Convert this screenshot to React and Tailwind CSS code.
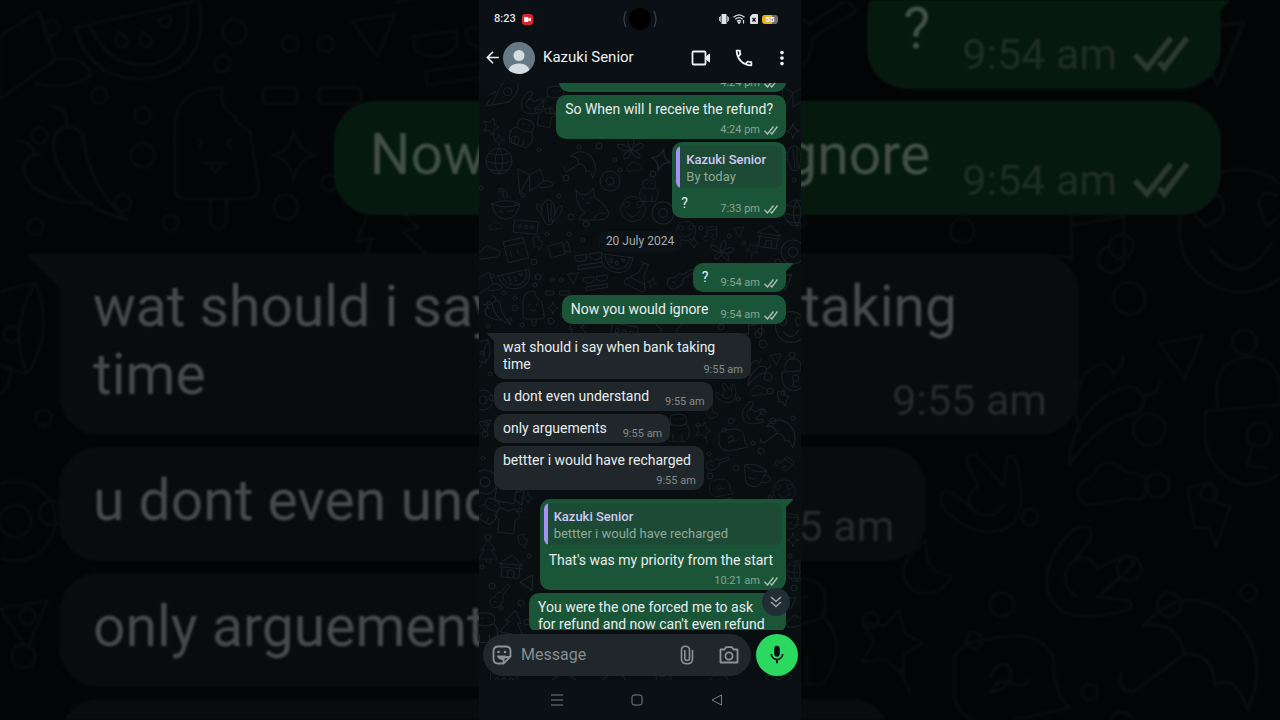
import { useState } from "react";
import clsx from "clsx";
import { MdArrowBack, MdMoreVert, MdMic, MdOutlineCall } from "react-icons/md";

const messages = [
  { id: 1, time: "4:24 pm", mine: true, layout: "stack" },
  { id: 2, text: "So When will I receive the refund?", time: "4:24 pm", mine: true, layout: "stack" },
  { id: 3, text: "?", time: "7:33 pm", mine: true, layout: "inline", quote: "By today" },
  { id: 4, date: "20 July 2024" },
  { id: 5, text: "?", time: "9:54 am", mine: true, layout: "inline", tail: true },
  { id: 6, text: "Now you would ignore", time: "9:54 am", mine: true, layout: "inline" },
  { id: 7, text: "wat should i say when bank taking time", time: "9:55 am", layout: "overlap", tail: true, space: true },
  { id: 8, text: "u dont even understand", time: "9:55 am", layout: "inline" },
  { id: 9, text: "only arguements", time: "9:55 am", layout: "inline" },
  { id: 10, text: "bettter i would have recharged", time: "9:55 am", layout: "stack" },
  {
    id: 11,
    text: "That's was my priority from the start",
    time: "10:21 am",
    mine: true,
    layout: "stack",
    tail: true,
    space: true,
    quote: "bettter i would have recharged",
  },
  { id: 12, text: "You were the one forced me to ask for refund and now can't even refund", mine: true, layout: "stack" },
];

const shapes = {
  lolly: "M-11-9Q-10-18 1-18Q0-13 4-11Q5-8 8-7L10 6Q11 10 6 10H-8Q-11 10-11 7ZM-2 10V16Q0 19 2 16V10M-5-5l1 1-1 1M3-5l-1 1 1 1M-4 1h6M-2 1q1 4 3 0",
  melon: "M-16-4L15-11Q18 4 6 8Q-11 12-16-4ZM-12-4Q-7 7 4 5Q14 2 12-10M-5-3q-2 3 1 4q3-1-1-4M1-3q-2 3 1 4q3-1-1-4M5-6q1 3 3 1q1-3-3-1",
  chili: "M-6-8q4-3 6 1Q1 4 10 12Q0 10-5 1Q-8-5-6-8ZM-10-3Q-16-2-12 4Q-6 9 2 8M-4-9q1-4-3-5M-11-3q-1-3-4-3",
  smiley: "M-14 0A14 14 0 1 0 14 0A14 14 0 1 0-14 0M-10-3q-2-4 2-4q3-3 4 1q1 3-4 5ZM4-6q1-4 4-2q4-1 3 3l-5 4ZM-7 4Q0 14 7 3",
  cloud: "M-8 6Q-13 4-10-1Q-6-2-6-4Q-2-10 4-4Q11-4 11 1Q9 6 4 4Q-2 6-8 6Z",
  bolt: "M-6-8L1-10L2-4L6-3L2 8L0 3L-4 3Z",
  hand: "M-3-11Q3-13 1-8L-3-3M-3-11Q-12-2-9 6Q-6 13 8 10Q13 9 11 7L3 6Q9 1 12-2Q12-6 7-3L3-1Q0-6-4-2Q-7 3-2 6",
  chat: "M-13-6Q-11-10 0-11Q11-12 12-4Q12 3 16 7L2 10Q-11 13-13 4ZM-4-1q3-5 5-2q1 5-5 6q2-4 6-2q2 1 4-1",
  globe: "M-13 0A13 13 0 1 0 13 0A13 13 0 1 0-13 0M-13 0Q0 5 13 0M-10-8Q0-4 10-8M-10 8Q0 12 10 8M0-13Q-8 0 0 13M0-13Q8 0 0 13",
  book: "M-16-12L-4-6L-14 12ZM-4-6L6-12L10 0L-4 10ZM10 0q8-1 9 4q-6 4-14 2",
  bowl: "M-14-2Q0 4 14-2Q10 14-1 13Q-12 12-14-2ZM-14-2Q0-9 14-2M-2-8q-3-4 1-8q5 5 1 8M-7 5l4 2M2 6l5-2",
  cactus: "M-4 12Q-13-2-5-11Q4-16 5 0L2 12ZM-9 2Q-16-5-13-8Q-9-8-8-2M5 2Q8-8 12-6Q14 0 3 10M-3-9L-1 10M1-9V9",
  cat: "M-14-14l5 5l7-1l5-6l2 10Q12-3 18 6Q21 16 8 16H-11Q-9 10-4 9Q-14 4-14-14ZM-8-5h2M0-6h2M-4-1h3M4 14q5-8 12-4",
  donut: "M-10 0A10 10 0 1 0 10 0A10 10 0 1 0-10 0M-4 0A4 4 0 1 0 4 0A4 4 0 1 0-4 0",
  leaf: "M0 0Q-6-8 0-14Q6-8 0 0Q8-10 13-5Q10 2 0 0Q10 2 9 8Q2 8 0 0Q0 9-7 9Q-9 3 0 0Q-12 2-14-5Q-8-8 0 0",
  star: "M0-7Q1-1 6 0Q1 1 0 7Q-1 1-6 0Q-1-1 0-7Z",
  rocket: "M-10 12L-5-8Q0-18 12-14Q14 0 4 7ZM-1-4A4 4 0 1 0 7-4A4 4 0 1 0-1-4M-10 12l-6 2l3-8M-9-2l-6 5",
  flask: "M-3-14h8M-1-14L-2-3L-11 9Q-12 13-8 13H9Q13 12 10 8L4-3V-14M-8 5H8",
  house: "M-13-2L0-12L13-2ZM-10-2V13H10V-2M-3 13V5H4V13M-13 2h26",
  note: "M-5 8A3 3 0 1 1-5 4V-8L7-10V4A3 3 0 1 1 3 1M-5-4L7-6",
  umbrella: "M-15 0Q-10-13 3-9Q15-4 14 10Q9 3 5 7Q2 0-4 3Q-8-4-15 0ZM-4 3L-12 15q-4 1-4-3",
  cup: "M-12-7Q0-12 11-5L6 11Q-3 15-8 9ZM-12-7Q0 0 11-5M10-1q8 1 5 6q-3 3-8 2M-5 4q3 3 6 0",
  lock: "M-12-1L10-6Q15 14 0 16Q-12 14-12-1ZM-9-2Q-13-14-3-16Q6-17 6-5M-1 3A3 3 0 1 0 5 3A3 3 0 1 0-1 3M1 6L0 11H5",
  moon: "M0-9Q-1 2 8 2Q4 10-4 7Q-12 0 0-9Z",
  mascot: "M-9 14Q-16 2-7-3Q-11-13 0-13Q11-13 8-3Q15 4 8 14ZM-7-3Q0 1 8-3M-3-8h1M3-8h1M-5 14V7M4 14V7",
  camera: "M-12-7H6V8H-12ZM6-2L13-7V8L6 4",
  cloth: "M-7-13L0-10L7-13L13-5L8-1V12H-8V-1L-13-5Z",
  pin: "M0-10L4-3L10-2L5 3L7 10L0 6L-7 9L-5 2L-10-3L-3-4ZM5 8l5 6",
  calendar: "M-11-9L9-12L13 9L-8 12ZM-10-4L10-7M-4 6l-1-5M3 4l-1-5",
  train: "M-13-7H13V7H-13ZM-9 0A2 2 0 1 0-5 0A2 2 0 1 0-9 0M-2 0A2 2 0 1 0 2 0A2 2 0 1 0-2 0M5 0A2 2 0 1 0 9 0A2 2 0 1 0 5 0",
  dash: "M-11-3H-4Q-2-1-4 1H-11Q-13-1-11-3ZM3-3H12Q14-1 12 1H3Q1-1 3-3Z",
  shades: "M-14-4h12v4q-5 5-12 0ZM1-4h12v4q-5 5-12 0ZM-12 6h24v4h-24Z",
  tree: "M0-14L-8-2H-4L-12 10H12L4-2H8ZM-2 10V14H3V10",
  guitar: "M9-14L2-5Q-3-7-4 0Q-13 2-9 9Q-3 15 2 8Q6 5 4-2L12-12ZM-5 5h3",
  tri: "M-6-3L6-5L1 7Z",
};

// [shape, x, y, rotation, scale]
const doodles = [
  ["rocket", 25, 95, 10, 1], ["hand", 52, 103, 0, 1], ["mascot", 76, 99, 0, 1], ["bolt", 100, 107, 30, 0.8],
  ["pin", 12, 126, 20, 0.8], ["mascot", 44, 132, 20, 1], ["cloth", 66, 117, 10, 0.8], ["tri", 86, 131, 0, 0.8], ["star", 20, 140, 0, 0.8],
  ["globe", 20, 161, 0, 1], ["book", 55, 181, 0, 1], ["bowl", 27, 206, 0, 1], ["cactus", 71, 212, 0, 1], ["umbrella", 105, 163, 25, 1],
  ["cat", 111, 204, 0, 1], ["donut", 131, 181, 0, 1], ["leaf", 152, 150, 0, 1], ["cloud", 155, 167, 0, 0.7], ["star", 182, 160, 15, 1.6],
  ["mascot", 170, 190, 0, 0.8], ["smiley", 154, 209, 0, 0.9], ["donut", 184, 213, 0, 1.1], ["cloud", 17, 226, 0, 0.6], ["train", 47, 227, 5, 0.9],
  ["calendar", 36, 250, -5, 1], ["bolt", 59, 244, 0, 0.8], ["camera", 80, 249, -15, 0.8], ["cloud", 10, 253, 0, 1], ["shades", 110, 258, -8, 1],
  ["note", 232, 234, 0, 0.8], ["house", 290, 236, 8, 0.9], ["star", 215, 243, 0, 0.8], ["leaf", 243, 252, 10, 0.9], ["pin", 274, 249, 45, 0.6],
  ["donut", 314, 252, 0, 1.2], ["smiley", 207, 231, 0, 0.7], ["tri", 260, 231, 0, 0.8],
  ["melon", 35, 280, 0, 1], ["tri", 94, 277, 0, 0.9], ["shades", 117, 280, -8, 0.9], ["flask", 160, 276, 25, 1], ["star", 173, 283, 15, 0.8],
  ["melon", 136, 263, 20, 1], ["book", 4, 284, 0, 1], ["dash", 78, 294, 0, 1], ["lolly", 55, 309, 0, 1], ["chili", 21, 311, 0, 1.1],
  ["star", 74, 308, 0, 0.9], ["guitar", 200, 279, 20, 1], ["cloth", 190, 330, 0, 1],
  ["smiley", 312, 327, 0, 1.1], ["tri", 305, 281, 0, 1.3], ["note", 275, 330, 0, 1.1], ["tree", 98, 330, -12, 1], ["train", 145, 332, 10, 1],
  ["tri", 297, 358, 0, 0.9], ["cup", 2, 352, 90, 1], ["lock", 315, 375, 8, 1], ["chili", 279, 374, 80, 1], ["hand", 247, 394, -90, 0.9],
  ["cloud", 280, 391, 0, 0.8], ["bolt", 304, 399, 0, 0.9], ["hand", 273, 413, 0, 1], ["moon", 233, 412, 0, 0.8], ["pin", 224, 430, 15, 0.8],
  ["mascot", 199, 427, 0, 1], ["chat", 253, 440, 0, 1], ["umbrella", 303, 432, 20, 1.1], ["donut", 4, 400, 0, 1], ["tri", 6, 425, 0, 1],
  ["cup", 276, 474, 10, 1], ["note", 306, 464, 45, 0.8], ["chat", 241, 488, 0, 0.8], ["guitar", 237, 463, 30, 0.8], ["smiley", 305, 491, 0, 0.8],
  ["camera", 30, 494, 10, 1.1], ["donut", 6, 482, 0, 1.2], ["star", 49, 498, 0, 0.8], ["cloth", 28, 521, 5, 1], ["bolt", 44, 542, 0, 0.8],
  ["tree", 9, 551, 0, 0.8], ["house", 32, 566, 5, 0.9], ["mascot", 10, 510, 30, 0.9], ["guitar", 20, 597, 0, 0.9], ["tri", 49, 583, -20, 1.2],
  ["mascot", 6, 627, 0, 1.1], ["tree", 34, 624, 10, 1], ["star", 314, 540, 0, 1], ["globe", 318, 571, 0, 0.8], ["cup", 312, 520, 0, 0.7],
  ["tri", 311, 602, 0, 1], ["cloud", 317, 622, 0, 0.9], ["book", 318, 98, 0, 0.9], ["star", 314, 131, 0, 1.1], ["globe", 318, 213, 0, 1],
  ["cactus", 317, 158, 0, 1], ["train", 25, 680, 0, 1], ["house", 85, 683, 0, 1], ["cloud", 135, 679, 0, 1], ["cat", 188, 684, 0, 0.8],
  ["donut", 240, 684, 0, 1], ["leaf", 300, 681, 0, 1],
];

const dots = [
  [36, 140, 4], [100, 147, 2], [22, 190, 2], [87, 178, 3], [80, 196, 2], [107, 224, 3], [136, 160, 2], [120, 146, 3], [141, 170, 2], [174, 174, 3],
  [92, 217, 3], [68, 234, 2], [90, 234, 2], [104, 240, 2], [55, 262, 3], [13, 276, 2], [59, 277, 3], [56, 285, 2], [73, 280, 2], [82, 280, 2],
  [25, 293, 2], [36, 298, 2], [36, 308, 3], [10, 303, 2], [31, 320, 2], [9, 326, 2], [43, 325, 2], [72, 321, 3], [83, 315, 2], [3, 353, 2],
  [11, 374, 2], [13, 398, 3], [7, 424, 2], [6, 434, 3], [4, 458, 2], [242, 327, 3], [282, 331, 3], [284, 344, 4], [313, 355, 3], [289, 377, 4],
  [291, 391, 3], [304, 393, 2], [259, 399, 2], [284, 412, 3], [294, 421, 3], [252, 421, 3], [219, 425, 2], [245, 430, 2], [215, 449, 2],
  [230, 454, 2], [274, 443, 2], [282, 451, 3], [314, 418, 2], [257, 468, 3], [219, 474, 2], [251, 501, 3], [291, 497, 2], [231, 476, 3],
  [9, 537, 3], [41, 510, 2], [13, 586, 3], [42, 603, 3], [50, 556, 2], [3, 567, 2], [48, 622, 3], [22, 608, 2], [311, 556, 2], [315, 588, 3],
  [265, 243, 2], [250, 236, 2], [222, 228, 2], [299, 262, 3], [315, 180, 2], [2, 188, 2], [44, 195, 2], [60, 150, 2],
];

function Wallpaper({ viewBox, className, strokeWidth }) {
  return (
    <svg viewBox={viewBox} preserveAspectRatio="xMidYMin slice" className={className} aria-hidden="true">
      <g fill="none" stroke="currentColor" strokeWidth={strokeWidth} strokeLinejoin="round" strokeLinecap="round">
        {doodles.map(([shape, x, y, angle, size], i) => (
          <path key={i} d={shapes[shape]} transform={`translate(${x} ${y}) rotate(${angle}) scale(${size})`} />
        ))}
        {dots.map(([x, y, r], i) => (
          <circle key={i} cx={x} cy={y} r={r} />
        ))}
      </g>
    </svg>
  );
}

function Ticks({ className }) {
  return (
    <svg viewBox="0 0 14 9" className={className} fill="none" stroke="currentColor" strokeWidth="1.4" aria-label="Delivered">
      <path d="M.5 4.700L3.500 8L9.500 .5M6.500 6.500L7.800 8L13.500 .5" />
    </svg>
  );
}

function Tail({ mine, className }) {
  return (
    <svg
      viewBox="0 0 8 9"
      className={clsx("absolute top-0", mine ? "left-full -ml-px" : "right-full -mr-px -scale-x-100", className)}
      fill="currentColor"
      aria-hidden="true"
    >
      <path d="M0 0H7Q8.500 .5 7.500 1.500L0 9Z" />
    </svg>
  );
}

function Quote({ text }) {
  return (
    <div className="mx-1 mt-1 flex h-[42px] overflow-hidden rounded-md bg-[#1c4a35] text-[13px] leading-[17px]">
      <span className="w-1 bg-[#a791f5]" />
      <div className="pt-[5px] pr-4 pl-[6px]">
        <p className="font-medium text-[#d0c9f8]">Kazuki Senior</p>
        <p className="text-[#8fa99b]">{text}</p>
      </div>
    </div>
  );
}

function Bubble({ message }) {
  const { text, time, mine, layout, tail, space, quote } = message;
  return (
    <div
      className={clsx(
        "relative max-w-[257px] rounded-[10px]",
        mine ? "self-end bg-[#1b5538]" : "self-start bg-[#1f272a]",
        tail && (mine ? "rounded-tr-none" : "rounded-tl-none"),
        space && "mt-[6px]",
        !text && "w-[227px]"
      )}
    >
      {tail && <Tail mine={mine} className={clsx("h-[9px] w-2", mine ? "text-[#1b5538]" : "text-[#1f272a]")} />}
      {quote && <Quote text={quote} />}
      <div
        className={clsx(
          "pr-2 pl-[9px]",
          quote ? "pt-[7px]" : "pt-[6px]",
          layout === "inline" && "flex justify-between gap-3",
          layout === "stack" && "flex flex-col",
          layout === "overlap" && "grid"
        )}
      >
        {text && (
          <p
            className={clsx(
              "text-[14px] leading-[17px] text-[#e9edef]",
              layout === "stack" && "pr-[5px]",
              layout === "inline" && "pb-[6px]",
              layout === "inline" && !mine && "pr-1",
              layout === "overlap" && "[grid-area:1/1] pb-[6px]"
            )}
          >
            {text}
          </p>
        )}
        {time && (
          <p
            className={clsx(
              "flex items-center gap-1 self-end justify-self-end pb-[2px] text-[11px] leading-[14px] whitespace-nowrap",
              mine ? "text-[#86a595]" : "text-[#838b8f]",
              layout === "overlap" && "[grid-area:1/1]",
              layout === "stack" && "mt-[5px]"
            )}
          >
            {time}
            {mine && <Ticks className="h-[9px] w-[14px] text-[#a9bfb3]" />}
          </p>
        )}
      </div>
    </div>
  );
}

function BackdropBubble({ message }) {
  const { text, time, mine, layout, tail, space } = message;
  return (
    <div
      className={clsx(
        "relative rounded-[40px] pt-5 pr-8",
        mine ? "self-end bg-[#06190f] pl-9" : "self-start bg-[#090b0d] pl-[34px]",
        tail && (mine ? "rounded-tr-none" : "rounded-tl-none"),
        space && "mt-[26px]",
        layout === "overlap" ? "grid max-w-[1020px]" : "flex justify-between gap-8"
      )}
    >
      {tail && <Tail mine={mine} className={clsx("h-9 w-8", mine ? "text-[#06190f]" : "text-[#090b0d]")} />}
      <p
        className={clsx(
          "pb-[26px] text-[57px] leading-[68px]",
          mine ? "text-[#424f48]" : "text-[#47484a]",
          layout === "overlap" && "[grid-area:1/1]",
          layout === "inline" && !mine && "pr-5"
        )}
      >
        {text}
      </p>
      <p
        className={clsx(
          "flex items-center gap-4 self-end justify-self-end pb-2 text-[43px] leading-[54px] whitespace-nowrap",
          mine ? "text-[#1f2d26]" : "text-[#27292b]",
          layout === "overlap" && "[grid-area:1/1]"
        )}
      >
        {time}
        {mine && <Ticks className="h-9 w-14 text-[#2c3931]" />}
      </p>
    </div>
  );
}

function Backdrop() {
  return (
    <div className="absolute inset-0 overflow-hidden bg-[#020406] blur-[1px]" aria-hidden="true">
      <Wallpaper viewBox="0 269 322 181" strokeWidth="0.8" className="absolute inset-0 h-full w-full text-[#090c0d]" />
      <div className="relative -mt-[25px] flex flex-col gap-3 px-[59px]">
        {messages.slice(4, 9).map((message) => (
          <BackdropBubble key={message.id} message={message} />
        ))}
        <div className="h-44 w-[832px] rounded-[40px] bg-[#090b0d]" />
      </div>
    </div>
  );
}

function StatusBar() {
  return (
    <div className="relative flex h-[38px] items-center justify-between px-[15px] text-[#dfe3e5]">
      <div className="flex items-center gap-[6px]">
        <span className="text-[11px] font-medium">8:23</span>
        <span className="flex size-[11px] items-center justify-center rounded-[3px] bg-[#d9262c]">
          <svg viewBox="0 0 8 6" className="h-[5px] w-[7px]" fill="#fff">
            <path d="M0 1Q0 0 1 0H4Q5 0 5 1V2L8 .5V5.500L5 4V5Q5 6 4 6H1Q0 6 0 5Z" />
          </svg>
        </span>
      </div>
      <svg viewBox="0 0 36 24" className="absolute top-[7px] left-1/2 h-6 w-9 -translate-x-1/2" fill="none">
        <circle cx="18" cy="12" r="11" fill="#000" />
        <path d="M4 4Q0 12 4 20M32 4Q36 12 32 20" stroke="#3c4244" strokeWidth="1.2" />
      </svg>
      <div className="flex items-center gap-1 pr-2">
        <svg viewBox="0 0 10 10" className="h-[10px] w-[10px]" fill="currentColor">
          <path d="M2.500 0H7.500V10H2.500ZM0 3H.8V7H0ZM1.300 2H2V8H1.300ZM8 2H8.700V8H8ZM9.200 3H10V7H9.200Z" />
        </svg>
        <svg viewBox="0 0 13 10" className="h-[10px] w-[13px]" fill="none" stroke="currentColor" strokeWidth="1.2">
          <path d="M.5 3.300Q6 -1.500 11.500 3.300M2.300 5.300Q6 2 9.700 5.300M4 7.200Q6 5.500 8 7.200" />
          <path d="M5 8L6 9.500L7 8ZM10.500 6V9.500" fill="currentColor" />
        </svg>
        <svg viewBox="0 0 8 10" className="h-[10px] w-2">
          <path d="M2.500 0H7Q8 0 8 1V9Q8 10 7 10H1Q0 10 0 9V2.500Z" fill="currentColor" />
          <path d="M2.500 4L5.500 7.500M5.500 4L2.500 7.500" stroke="#0a1014" strokeWidth="1.200" />
        </svg>
        <span className="flex h-[9px] w-4 items-center justify-center rounded-[3px] bg-linear-to-r from-[#e5b322] from-60% to-[#6c7072] to-60% text-[8px] leading-[9px] font-bold text-white">
          55
        </span>
      </div>
    </div>
  );
}

function Header() {
  return (
    <header className="flex h-[45px] items-center pr-2 pb-[6px] pl-1 text-[#eef1f2]">
      <button type="button" aria-label="Back">
        <MdArrowBack className="size-[19px]" />
      </button>
      <svg viewBox="0 0 32 32" className="ml-px size-8 rounded-full" aria-hidden="true">
        <rect width="32" height="32" fill="#667a86" />
        <circle cx="16" cy="13.500" r="5.500" fill="#d3dde2" />
        <path d="M5 32Q5 21.500 16 21.500Q27 21.500 27 32Z" fill="#d3dde2" />
      </svg>
      <h1 className="ml-2 flex-1 text-[15px]">Kazuki Senior</h1>
      <button type="button" aria-label="Video call">
        <svg viewBox="0 0 20 16" className="h-4 w-5" fill="none" stroke="currentColor" strokeWidth="1.800" strokeLinejoin="round">
          <rect x="1.500" y="1.500" width="13" height="13" rx="1" />
          <path d="M15 7L18.500 4V12L15 9Z" fill="currentColor" strokeWidth="1" />
        </svg>
      </button>
      <button type="button" aria-label="Call" className="ml-[22px]">
        <MdOutlineCall className="size-[22px]" />
      </button>
      <button type="button" aria-label="More options" className="ml-4">
        <MdMoreVert className="size-[22px]" />
      </button>
    </header>
  );
}

function Composer() {
  const [draft, setDraft] = useState("");

  return (
    <form className="relative flex h-[50px] items-center gap-[5px] pr-[3px] pl-1" onSubmit={(e) => e.preventDefault()}>
      <div className="flex h-[42px] min-w-0 flex-1 items-center rounded-full bg-[#1f272a] pr-3 pl-[9px] text-[#8c9498]">
        <button type="button" aria-label="Stickers">
          <svg viewBox="0 0 20 20" className="size-5" fill="none" stroke="currentColor" strokeWidth="1.800" strokeLinejoin="round">
            <path d="M6 1.500H14Q18.500 1.500 18.500 6V11.500L11.500 18.500H6Q1.500 18.500 1.500 14V6Q1.500 1.500 6 1.500Z" />
            <path d="M11.500 18V15Q11.500 12 14.500 12H18" />
            <path d="M4.800 10.500H14Q12 12 11.500 15Q6 15 4.800 10.500Z" fill="currentColor" stroke="none" />
            <circle cx="6.500" cy="7" r="1.300" fill="currentColor" stroke="none" />
            <circle cx="13" cy="7" r="1.300" fill="currentColor" stroke="none" />
          </svg>
        </button>
        <input
          type="text"
          aria-label="Message"
          placeholder="Message"
          value={draft}
          onChange={(e) => setDraft(e.target.value)}
          className="ml-[9px] min-w-0 flex-1 bg-transparent text-[16px] text-[#e9edef] outline-none placeholder:text-[#858d91]"
        />
        <button type="button" aria-label="Attach">
          <svg viewBox="0 0 14 20" className="h-5 w-[14px]" fill="none" stroke="currentColor" strokeWidth="1.600" strokeLinecap="round">
            <path d="M12.500 5.500V14Q12.500 18.800 7 18.800Q1.500 18.800 1.500 14V5Q1.500 1.200 5.500 1.200Q9.500 1.200 9.500 5V13Q9.500 15.500 7.200 15.500Q4.800 15.500 4.800 13V5.500" />
          </svg>
        </button>
        <button type="button" aria-label="Camera" className="ml-[25px]">
          <svg viewBox="0 0 20 18" className="h-[18px] w-5" fill="none" stroke="currentColor" strokeWidth="1.800" strokeLinejoin="round">
            <path d="M1.500 3.500H5.500L7 1.200H13L14.500 3.500H18.500V16.500H1.500Z" />
            <circle cx="10" cy="10" r="3.600" />
          </svg>
        </button>
      </div>
      <button type="button" aria-label="Record voice message" className="flex size-[42px] items-center justify-center rounded-full bg-[#2bd961] text-[#0a1014]">
        <MdMic className="size-[22px]" />
      </button>
    </form>
  );
}

function NavBar() {
  return (
    <nav className="relative flex h-10 items-center justify-center gap-[68px] bg-[#0a1014] pr-[6px] text-[#777d80]">
      <button type="button" aria-label="Recent apps">
        <svg viewBox="0 0 12 12" className="size-3" stroke="currentColor">
          <path d="M0 1H12M0 6H12M0 11H12" />
        </svg>
      </button>
      <button type="button" aria-label="Home">
        <svg viewBox="0 0 12 12" className="size-3" fill="none" stroke="currentColor">
          <rect x="1" y="1" width="10" height="10" rx="2" />
        </svg>
      </button>
      <button type="button" aria-label="Go back">
        <svg viewBox="0 0 12 12" className="size-3" fill="none" stroke="currentColor" strokeLinejoin="round">
          <path d="M10.500 1V11L1 6Z" />
        </svg>
      </button>
    </nav>
  );
}

function App() {
  return (
    <div className="relative h-screen overflow-hidden bg-[#020406] font-['Roboto',sans-serif]">
      <Backdrop />
      <main className="relative mx-auto flex h-full w-full max-w-[322px] flex-col overflow-hidden bg-[#090e11]">
        <Wallpaper viewBox="0 0 322 720" strokeWidth="1" className="absolute inset-0 h-full w-full text-[#1b2225]" />
        <div className="relative bg-[#0a1014]">
          <StatusBar />
          <Header />
        </div>
        <section className="relative min-h-0 flex-1">
          <div className="h-full overflow-hidden">
            <div className="-mt-[18px] flex flex-col gap-[3px] px-[15px]">
              {messages.map((message) =>
                message.date ? (
                  <p key={message.id} className="mt-[10px] mb-2 self-center rounded-lg bg-[#0c1215] px-2 py-[3px] text-[12px] leading-[15px] text-[#a5abae]">
                    {message.date}
                  </p>
                ) : (
                  <Bubble key={message.id} message={message} />
                )
              )}
            </div>
          </div>
          <button
            type="button"
            aria-label="Scroll to latest"
            className="absolute right-[11px] bottom-[14px] flex size-7 items-center justify-center rounded-full bg-[#232d35] text-[#9aa2a7]"
          >
            <svg viewBox="0 0 12 12" className="size-3" fill="none" stroke="currentColor" strokeWidth="1.600">
              <path d="M1 1L6 5.500L11 1M1 6L6 10.500L11 6" />
            </svg>
          </button>
        </section>
        <Composer />
        <NavBar />
      </main>
    </div>
  );
}

export default App;
